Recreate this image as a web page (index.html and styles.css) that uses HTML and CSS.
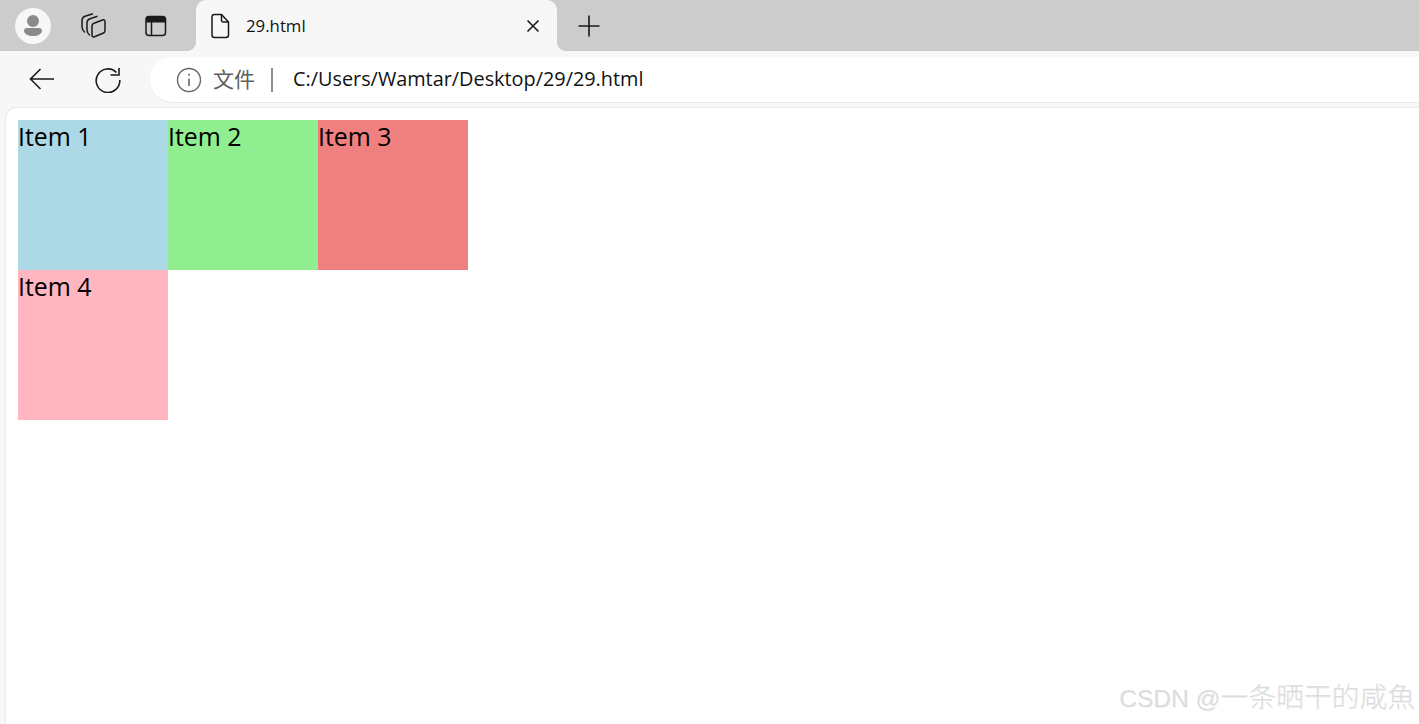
FILE: index.html
```html
<!DOCTYPE html>
<html>
<head>
    <title>29.html</title>
    <meta charset="UTF-8">
    <link rel="stylesheet" href="styles.css">
</head>
<body>
    <div class="tabbar">
        <div class="avatar">
            <svg width="24" height="26" viewBox="0 0 24 26">
                <circle cx="12" cy="8" r="6" fill="#8a8a8a"/>
                <path d="M3 17.500C3 15.500 5 15 7 15H17C19 15 21 15.500 21 17.500C21 21 17 23 12 23C7 23 3 21 3 17.500Z" fill="#8a8a8a"/>
            </svg>
        </div>
        <div class="tab-icon collections">
            <svg width="28" height="28" viewBox="0 0 28 28" fill="none" stroke="#1a1a1a" stroke-width="1.500" stroke-linejoin="round">
                <path d="M13 1.800L5 4.300Q2 5.300 2 8.800V15Q2 18 5 20.500"/>
                <path d="M17.500 4.300L10 6.800Q7 7.800 7 11V18Q7 21 10 23.500"/>
                <path d="M14 11.300L22.500 8Q25 7.300 25 10V18.500Q25 20.500 23 21.200L14.500 24.800Q12 25.500 12 23V14Q12 12 14 11.300Z"/>
            </svg>
        </div>
        <div class="tab-icon sidebar">
            <svg width="24" height="24" viewBox="0 0 24 24" fill="none" stroke="#1a1a1a" stroke-width="1.500">
                <rect x="2" y="2.500" width="19.500" height="19" rx="3"/>
                <path d="M2 8.500V5.500C2 3.500 3.500 2 5.500 2H18.500C20.500 2 22 3.500 22 5.500V8.500Z" fill="#1a1a1a" stroke="none"/>
                <path d="M7.500 8V21.500"/>
            </svg>
        </div>
        <div class="tab">
            <svg class="file-icon" width="20" height="26" viewBox="0 0 20 26" fill="none" stroke="#1a1a1a" stroke-width="1.500" stroke-linejoin="round">
                <path d="M2 4C2 2.500 3 1.500 4.500 1.500H11.500L18.500 9V22C18.500 23.500 17.500 24.500 16 24.500H4.500C3 24.500 2 23.500 2 22Z"/>
                <path d="M11.500 1.500V7C11.500 8.200 12.300 9 13.500 9H18.500"/>
            </svg>
            <span class="tab-title">29.html</span>
            <svg class="close-icon" width="14" height="14" viewBox="0 0 14 14" stroke="#1a1a1a" stroke-width="1.600">
                <path d="M1.500 1.500L12.500 12.500M12.500 1.500L1.500 12.500"/>
            </svg>
        </div>
        <svg class="new-tab" width="22" height="22" viewBox="0 0 22 22" stroke="#1a1a1a" stroke-width="1.600">
            <path d="M11 0.500V21.500M0.500 11H21.500"/>
        </svg>
    </div>

    <div class="toolbar">
        <svg class="nav-back" width="26" height="22" viewBox="0 0 26 22" fill="none" stroke="#1a1a1a" stroke-width="1.600">
            <path d="M25 11H1.500M11.500 1L1.500 11L11.500 21"/>
        </svg>
        <svg class="nav-reload" width="26" height="26" viewBox="0 0 26 26" fill="none" stroke="#1a1a1a" stroke-width="1.600">
            <path d="M21.500 5.500A11.800 11.800 0 1 0 24.800 13"/>
            <path d="M24 1V8H15.500"/>
        </svg>
        <div class="address">
            <svg class="info-icon" width="26" height="26" viewBox="0 0 26 26" fill="none" stroke="#666" stroke-width="1.400">
                <circle cx="13" cy="13" r="11.500"/>
                <path d="M13 11.500V19" stroke-width="1.600"/>
                <circle cx="13" cy="7.800" r="1" fill="#666" stroke="none"/>
            </svg>
            <span class="scheme">文件</span>
            <span class="divider"></span>
            <span class="url">C:/Users/Wamtar/Desktop/29/29.html</span>
        </div>
    </div>

    <div class="page">
        <div class="grid">
            <div class="item blue">Item 1</div>
            <div class="item green">Item 2</div>
            <div class="item coral">Item 3</div>
            <div class="item pink">Item 4</div>
        </div>
    </div>

    <div class="watermark">CSDN @<span class="watermark-cjk">一条晒干的咸魚</span></div>
</body>
</html>
```

FILE: styles.css
```css
* {
    box-sizing: border-box;
    margin: 0;
    padding: 0;
}

html, body {
    height: 100%;
    overflow: hidden;
}

body {
    font-family: "Open Sans", "Noto Sans CJK SC", sans-serif;
    background-color: #f7f7f7;
    color: #000;
    display: flex;
    flex-direction: column;
}

.tabbar {
    height: 51px;
    flex: none;
    background-color: #cccccc;
    display: flex;
    align-items: center;
    padding-left: 15px;
}

.avatar {
    width: 36px;
    height: 36px;
    border-radius: 50%;
    background: #f7f7f7;
    display: flex;
    align-items: center;
    justify-content: center;
}

.tab-icon {
    display: flex;
    align-items: center;
}

.collections {
    margin-left: 29px;
}

.sidebar {
    margin-left: 36px;
}

.tab {
    width: 361px;
    height: 51px;
    margin-left: 28px;
    background: #f7f7f7;
    border-radius: 10px 10px 0 0;
    display: flex;
    align-items: center;
    padding-left: 14px;
    position: relative;
}

.tab:before,
.tab:after {
    content: "";
    position: absolute;
    bottom: 0;
    width: 10px;
    height: 10px;
}

.tab:before {
    left: -10px;
    background: radial-gradient(circle at 0 0, transparent 10px, #f7f7f7 10.5px);
}

.tab:after {
    right: -10px;
    background: radial-gradient(circle at 100% 0, transparent 10px, #f7f7f7 10.5px);
}

.tab-title {
    font-size: 16.8px;
    line-height: 20px;
    margin-left: 16px;
    color: #111;
}

.close-icon {
    margin-left: auto;
    margin-right: 17px;
}

.new-tab {
    margin-left: 21px;
}

.toolbar {
    height: 57px;
    flex: none;
    display: flex;
    align-items: flex-start;
    padding-left: 29px;
}

.nav-back {
    margin-top: 17px;
}

.nav-reload {
    margin-top: 16px;
    margin-left: 40px;
}

.address {
    flex: 1;
    height: 45px;
    margin-top: 6px;
    margin-left: 29px;
    background: #fff;
    border-radius: 22px 0 0 22px;
    display: flex;
    align-items: center;
    padding-left: 26px;
    box-shadow: 0 1px 1px rgba(0, 0, 0, 0.06);
}

.scheme {
    font-size: 21px;
    line-height: 28px;
    margin-top: -1px;
    color: #606060;
    margin-left: 11px;
}

.divider {
    width: 2px;
    height: 24px;
    background: #8f8f8f;
    margin-left: 16px;
}

.url {
    font-size: 19.85px;
    line-height: 26px;
    margin-top: -1px;
    margin-left: 20px;
    color: #111;
}

.page {
    flex: 1;
    margin-left: 6px;
    padding: 12px;
    background: #fff;
    border-radius: 10px 0 0 0;
    box-shadow: 0 0 2px rgba(0, 0, 0, 0.18);
}

.grid {
    display: flex;
    flex-wrap: wrap;
    width: 450px;
}

.item {
    width: 150px;
    height: 150px;
    font-size: 24.9px;
    line-height: 32px;
}

.blue {
    background-color: lightblue;
}

.green {
    background-color: lightgreen;
}

.coral {
    background-color: lightcoral;
}

.pink {
    background-color: lightpink;
}

.watermark {
    position: absolute;
    right: 4px;
    bottom: 7px;
    font-family: "Liberation Sans", "Noto Sans CJK SC", sans-serif;
    font-size: 24.5px;
    line-height: 36px;
    color: #dcdcdc;
    text-shadow: 1px 1px 0 rgba(0, 0, 0, 0.06);
}

.watermark-cjk {
    font-size: 27.8px;
    font-weight: 300;
}
```
